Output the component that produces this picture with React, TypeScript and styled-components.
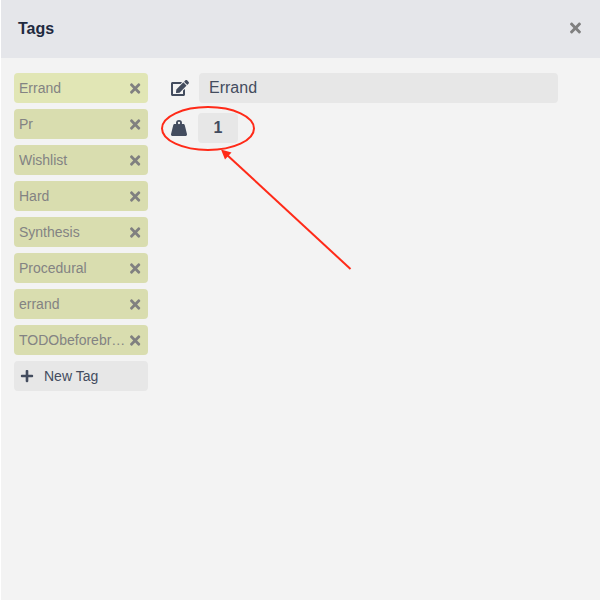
import React from 'react';
import styled, { createGlobalStyle } from 'styled-components';
import { FaEdit, FaPlus, FaTimes } from 'react-icons/fa';

const GlobalStyle = createGlobalStyle`
  * { box-sizing: border-box; }
  body {
    margin: 0;
    background: #fff;
    font-family: "Liberation Sans", Arial, sans-serif;
    overflow: hidden;
  }
`;

const Dialog = styled.main`
  position: relative;
  width: 599px;
  height: 600px;
  margin-left: 1px;
  background: #f3f3f3;
  color: #434c5e;
`;

const Header = styled.header`
  display: flex;
  align-items: center;
  justify-content: space-between;
  height: 58px;
  padding: 0 19px 2px 17px;
  background: #e5e6ea;
`;

const Title = styled.h1`
  margin: 0;
  padding-top: 2px;
  font-size: 16px;
  line-height: 20px;
  color: #1f2a40;
`;

const IconButton = styled.button<{ $small?: boolean }>`
  display: flex;
  flex: none;
  padding: 0;
  border: 0;
  background: none;
  color: #808080;

  svg {
    width: ${(p) => (p.$small ? '10.3px' : '11px')};
    height: ${(p) => (p.$small ? '15px' : '16px')};
  }
`;

const Body = styled.div`
  display: flex;
  align-items: flex-start;
  padding: 15px 0 0 13px;
`;

const TagList = styled.div`
  display: flex;
  flex-direction: column;
  gap: 6px;
  width: 134px;
`;

const Tag = styled.div<{ $selected?: boolean }>`
  display: flex;
  align-items: center;
  justify-content: space-between;
  height: 30px;
  padding: 0 7.5px 0 5px;
  border-radius: 4px;
  background: ${(p) => (p.$selected ? '#e1e6b5' : '#d9ddaf')};
  color: #838383;
`;

const TagName = styled.span`
  width: 107px;
  font-size: 14px;
  line-height: 20px;
  overflow: hidden;
  text-overflow: ellipsis;
  white-space: nowrap;
`;

const NewTag = styled.button`
  display: flex;
  align-items: center;
  gap: 10px;
  height: 30px;
  padding: 0 6px;
  border: 0;
  border-radius: 4px;
  background: #e7e7e7;
  color: #434c5e;
  font: 14px/20px "Liberation Sans", Arial, sans-serif;
`;

const Editor = styled.div`
  display: flex;
  flex-direction: column;
  gap: 10px;
  margin-left: 23px;
`;

const Field = styled.label`
  display: flex;
  align-items: center;
  height: 30px;
`;

const FieldIcon = styled.span<{ $width: number; $gap: number }>`
  display: flex;
  flex: none;
  width: ${(p) => p.$width}px;
  margin-right: ${(p) => p.$gap}px;

  svg { flex: none; width: ${(p) => p.$width}px; height: 16px; }
`;

const Input = styled.input<{ $weight?: boolean }>`
  width: ${(p) => (p.$weight ? '40px' : '359px')};
  height: 30px;
  padding: ${(p) => (p.$weight ? '0' : '0 10px')};
  border: 0;
  border-radius: 4px;
  background: #e7e7e7;
  color: #434c5e;
  font: ${(p) => (p.$weight ? 'bold' : 'normal')} 16px "Liberation Sans", Arial, sans-serif;
  text-align: ${(p) => (p.$weight ? 'center' : 'left')};
`;

const Annotation = styled.svg`
  position: absolute;
  left: 157px;
  top: 100px;
  width: 200px;
  height: 175px;
  pointer-events: none;
`;

const WeightIcon = () => (
  <svg viewBox="0 0 16 16" fill="currentColor">
    <path
      fillRule="evenodd"
      d="M5.15 4C5.05 3.7 5 3.35 5 3a3 3 0 0 1 6 0c0 .35-.05.7-.15 1h1.45c.7 0 1.3.48 1.48 1.15l2.17 8.95c.24.98-.45 1.9-1.45 1.9h-13C.5 16-.19 15.08.05 14.1L2.22 5.15C2.4 4.48 3 4 3.7 4ZM8 1.85a1.15 1.15 0 1 0 0 2.3 1.15 1.15 0 0 0 0-2.3Z"
    />
  </svg>
);

const tags = ['Errand', 'Pr', 'Wishlist', 'Hard', 'Synthesis', 'Procedural', 'errand', 'TODObeforebreak'];

export default function App() {
  return (
    <>
      <GlobalStyle />
      <Dialog>
        <Header>
          <Title>Tags</Title>
          <IconButton aria-label="Close"><FaTimes /></IconButton>
        </Header>
        <Body>
          <TagList>
            {tags.map((name, index) => (
              <Tag key={name} $selected={index === 0}>
                <TagName>{name}</TagName>
                <IconButton $small><FaTimes /></IconButton>
              </Tag>
            ))}
            <NewTag><FaPlus />New Tag</NewTag>
          </TagList>
          <Editor>
            <Field>
              <FieldIcon $width={18} $gap={10}><FaEdit /></FieldIcon>
              <Input defaultValue="Errand" />
            </Field>
            <Field>
              <FieldIcon $width={16} $gap={11}><WeightIcon /></FieldIcon>
              <Input $weight defaultValue="1" />
            </Field>
          </Editor>
        </Body>
        <Annotation viewBox="158 100 200 175" fill="none">
          <ellipse cx="208" cy="128.5" rx="46" ry="21.5" stroke="#ff2a18" strokeWidth="2" />
          <path d="M226 154L350.5 269" stroke="#ff2a18" strokeWidth="2" />
          <path d="M221 149.5L231.5 152.5L225 159.5Z" fill="#ff2a18" />
        </Annotation>
      </Dialog>
    </>
  );
}
